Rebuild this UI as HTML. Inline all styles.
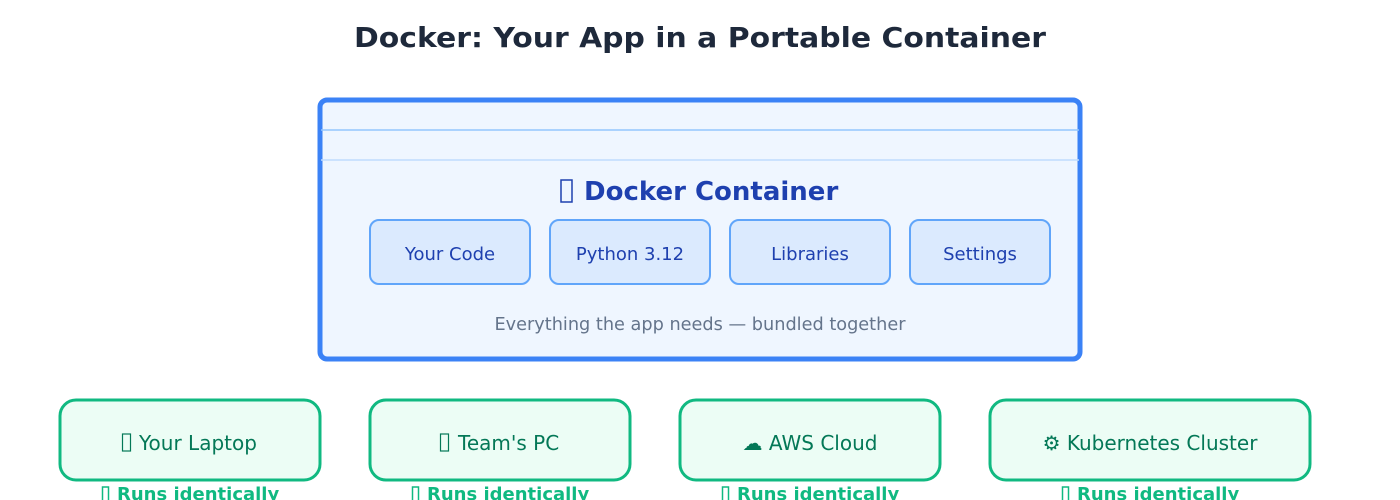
<!DOCTYPE html>
<html><head><meta charset="utf-8"><style>html,body{margin:0;padding:0;background:#fff}svg{display:block}text{font-family:"DejaVu Sans","Liberation Sans",sans-serif}</style></head>
<body>
<svg width="1400" height="500" viewBox="0 0 1400 500" xmlns="http://www.w3.org/2000/svg">
<text x="700" y="47" text-anchor="middle" font-size="28" font-weight="bold" fill="#1e293b" textLength="692" lengthAdjust="spacingAndGlyphs">Docker: Your App in a Portable Container</text>
<rect x="320" y="100" width="760" height="259" rx="7" fill="#eff6ff" stroke="#3b82f6" stroke-width="5"/>
<line x1="321" y1="130" x2="1079" y2="130" stroke="#93c5fd" stroke-width="1.5"/>
<line x1="321" y1="160" x2="1079" y2="160" stroke="#bfdbfe" stroke-width="1.5"/>
<rect x="561" y="180" width="11" height="22" fill="none" stroke="#1e40af" stroke-width="1.5"/>
<text x="584" y="200" font-size="26" font-weight="bold" fill="#1e40af">Docker Container</text>
<g fill="#dbeafe" stroke="#60a5fa" stroke-width="2">
<rect x="370" y="220" width="160" height="64" rx="9"/>
<rect x="550" y="220" width="160" height="64" rx="9"/>
<rect x="730" y="220" width="160" height="64" rx="9"/>
<rect x="910" y="220" width="140" height="64" rx="9"/>
</g>
<g font-size="18" fill="#1e40af" text-anchor="middle">
<text x="450" y="260">Your Code</text>
<text x="630" y="260">Python 3.12</text>
<text x="810" y="260">Libraries</text>
<text x="980" y="260">Settings</text>
</g>
<text x="700" y="330" text-anchor="middle" font-size="17.7" fill="#64748b">Everything the app needs — bundled together</text>
<g fill="#ecfdf5" stroke="#10b981" stroke-width="3">
<rect x="60" y="400" width="260" height="80" rx="16"/>
<rect x="370" y="400" width="260" height="80" rx="16"/>
<rect x="680" y="400" width="260" height="80" rx="16"/>
<rect x="990" y="400" width="320" height="80" rx="16"/>
</g>
<g fill="none" stroke="#047857" stroke-width="1.2">
<rect x="122.5" y="434" width="8" height="17"/>
<rect x="440.5" y="434" width="8" height="17"/>
</g>
<g font-size="20" fill="#047857">
<text x="139" y="450">Your Laptop</text>
<text x="458" y="450">Team's PC</text>
<text x="810" y="450" text-anchor="middle">☁ AWS Cloud</text>
<text x="1150" y="450" text-anchor="middle">⚙ Kubernetes Cluster</text>
</g>
<g fill="none" stroke="#10b981" stroke-width="1.5">
<rect x="102.5" y="487" width="6" height="16"/>
<rect x="412.5" y="487" width="6" height="16"/>
<rect x="722.5" y="487" width="6" height="16"/>
<rect x="1062.5" y="487" width="6" height="16"/>
</g>
<g font-size="18" font-weight="bold" fill="#10b981">
<text x="117" y="500">Runs identically</text>
<text x="427" y="500">Runs identically</text>
<text x="737" y="500">Runs identically</text>
<text x="1077" y="500">Runs identically</text>
</g>
</svg>
</body></html>
